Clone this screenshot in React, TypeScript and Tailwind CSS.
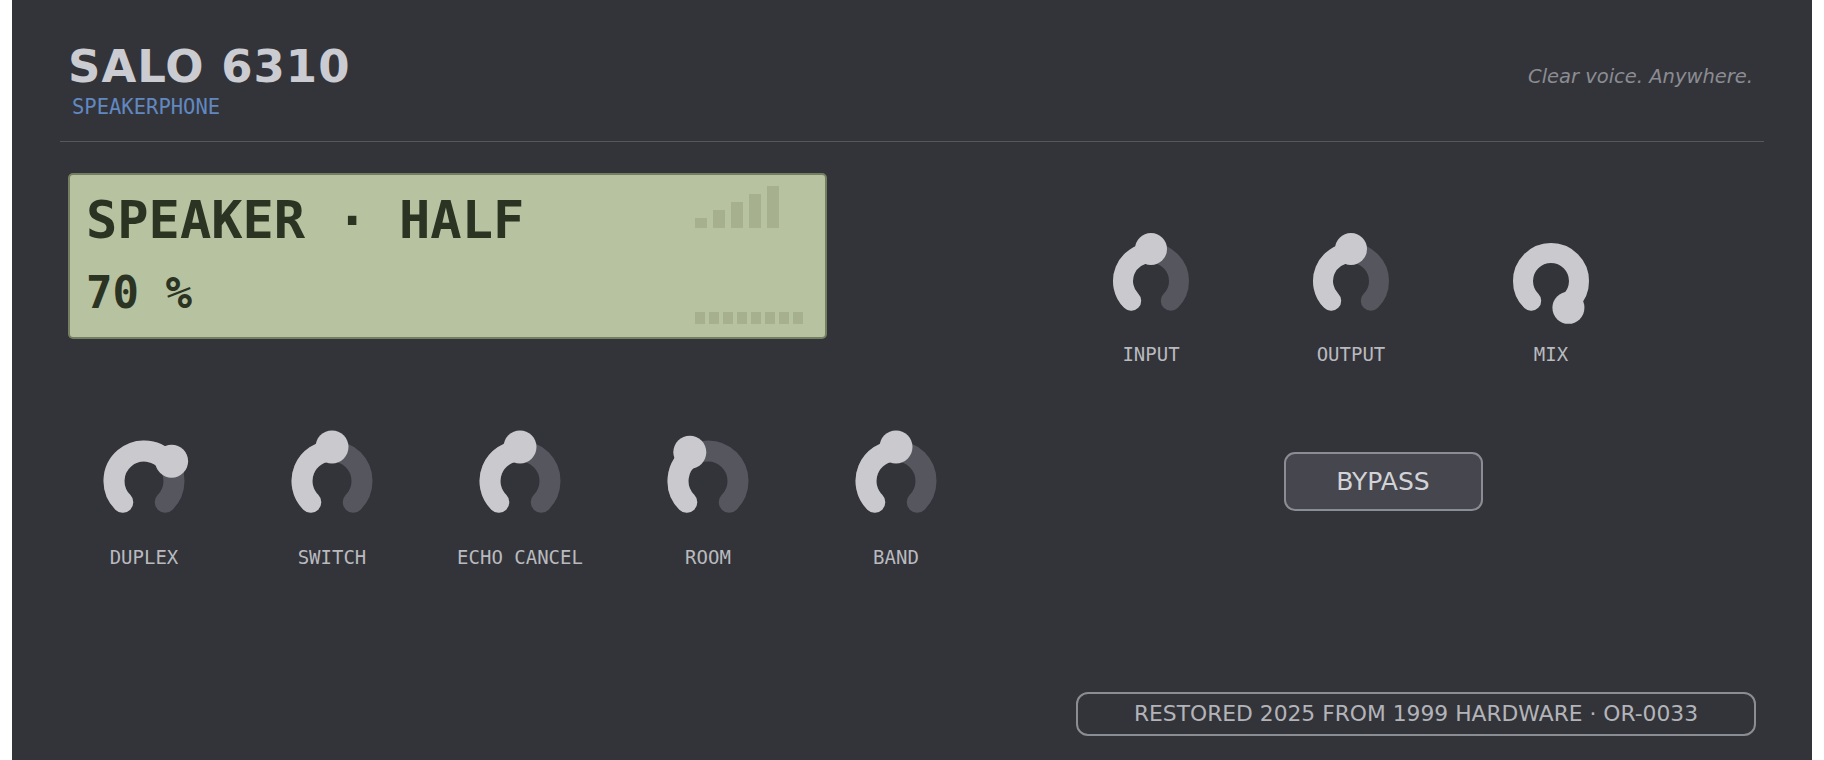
import React from 'react';

const sans = "font-['DejaVu_Sans',sans-serif]";
const mono = "font-['DejaVu_Sans_Mono',monospace]";

type KnobSize = { r: number; w: number; d: number; t: number; gap: number };

const TOP: KnobSize = { r: 28, w: 20, d: 32, t: 16, gap: 11 };
const BOTTOM: KnobSize = { r: 30, w: 21, d: 34, t: 16.5, gap: 14 };

function Knob({ value, label, size }: { value: number; label: string; size: KnobSize }) {
  const c = 52;
  const { r, w, d, t, gap } = size;
  const pt = (deg: number, rad: number) => {
    const a = (deg * Math.PI) / 180;
    return [c + rad * Math.sin(a), c - rad * Math.cos(a)];
  };
  // ring spans 270deg, the thumb travels a little past both ends
  const start = -135;
  const end = 135;
  const thumbAng = -147 + 294 * value;
  const arcEnd = Math.max(start, Math.min(end, thumbAng));
  const arc = (a0: number, a1: number) => {
    const [x0, y0] = pt(a0, r);
    const [x1, y1] = pt(a1, r);
    const large = a1 - a0 > 180 ? 1 : 0;
    return `M ${x0} ${y0} A ${r} ${r} 0 ${large} 1 ${x1} ${y1}`;
  };
  const [tx, ty] = pt(thumbAng, d);

  return (
    <div className="flex w-[124px] flex-col items-center">
      <svg width="104" height="104" viewBox="0 0 104 104">
        <path d={arc(start, end)} fill="none" stroke="#55565e" strokeWidth={w} strokeLinecap="round" />
        {arcEnd > start + 0.5 && (
          <path d={arc(start, arcEnd)} fill="none" stroke="#c9c9ce" strokeWidth={w} strokeLinecap="round" />
        )}
        <circle cx={tx} cy={ty} r={t} fill="#c9c9ce" />
      </svg>
      <div
        className={`${mono} text-[19px] leading-[20px] whitespace-nowrap text-[#b9babf]`}
        style={{ marginTop: gap }}
      >
        {label}
      </div>
    </div>
  );
}

function Lcd() {
  const bars = [10, 18, 26, 34, 42];
  return (
    <div className="flex h-[166px] w-[759px] justify-between rounded-[5px] border-2 border-[#737f60] bg-[#b7c3a0]">
      <div className={`${mono} pl-[16px] pt-[19px] font-bold text-[#2b3323]`}>
        <div className="text-[52px] leading-[52px] whitespace-pre">SPEAKER · HALF</div>
        <div className="mt-[25px] text-[44px] leading-[44px] whitespace-pre">70 %</div>
      </div>
      <div className="mr-[22px] flex w-[108px] flex-col justify-between pt-[11px] pb-[13px]">
        <div className="flex h-[42px] items-end gap-[6px]">
          {bars.map((h, i) => (
            <div key={i} className="w-[12px] bg-[#a6b08f]" style={{ height: h }} />
          ))}
        </div>
        <div className="flex gap-[4px]">
          {Array.from({ length: 8 }).map((_, i) => (
            <div key={i} className="h-[12px] w-[10px] bg-[#a6b08f]" />
          ))}
        </div>
      </div>
    </div>
  );
}

export default function App() {
  return (
    <div className="min-h-screen bg-white px-[12px]">
      <div className="min-h-screen bg-[#33343a] px-12 pt-[44px] pb-12">
        {/* header */}
        <div className="flex items-start justify-between border-b border-[#56575d] px-2 pb-[22px]">
          <div>
            <div className={`${sans} text-[45px] leading-[45px] font-bold tracking-[1px] text-[#cbccd1]`}>
              SALO 6310
            </div>
            <div className={`${mono} mt-[6px] ml-[4px] text-[20.5px] leading-[24px] text-[#6188c0]`}>
              SPEAKERPHONE
            </div>
          </div>
          <div className={`${sans} mt-[21px] mr-[3px] text-[19.5px] leading-[24px] italic text-[#8b8c92]`}>
            Clear voice. Anywhere.
          </div>
        </div>

        {/* body */}
        <div className="flex px-2 pt-[31px]">
          <div className="flex w-[942px] flex-col">
            <Lcd />
            <div className="mt-[90px] ml-[14px] flex gap-[64px]">
              <Knob value={0.685} label="DUPLEX" size={BOTTOM} />
              <Knob value={0.5} label="SWITCH" size={BOTTOM} />
              <Knob value={0.5} label="ECHO CANCEL" size={BOTTOM} />
              <Knob value={0.39} label="ROOM" size={BOTTOM} />
              <Knob value={0.5} label="BAND" size={BOTTOM} />
            </div>
          </div>
          <div className="flex flex-1 flex-col">
            <div className="mt-[56px] flex gap-[76px] pl-[79px]">
              <Knob value={0.5} label="INPUT" size={TOP} />
              <Knob value={0.5} label="OUTPUT" size={TOP} />
              <Knob value={1} label="MIX" size={TOP} />
            </div>
            <button
              className={`${sans} mt-[88px] flex h-[59px] w-[199px] items-center justify-center self-center rounded-[11px] border-2 border-[#8b8d94] bg-[#45464e] text-[25px] text-[#d2d3d8]`}
            >
              BYPASS
            </button>
            <div
              className={`${sans} mt-[181px] flex h-[44px] w-[680px] items-center justify-center self-end rounded-[12px] border-2 border-[#8b8d94] text-[21.8px] text-[#b3b4b9]`}
            >
              RESTORED 2025 FROM 1999 HARDWARE · OR-0033
            </div>
          </div>
        </div>
      </div>
    </div>
  );
}
